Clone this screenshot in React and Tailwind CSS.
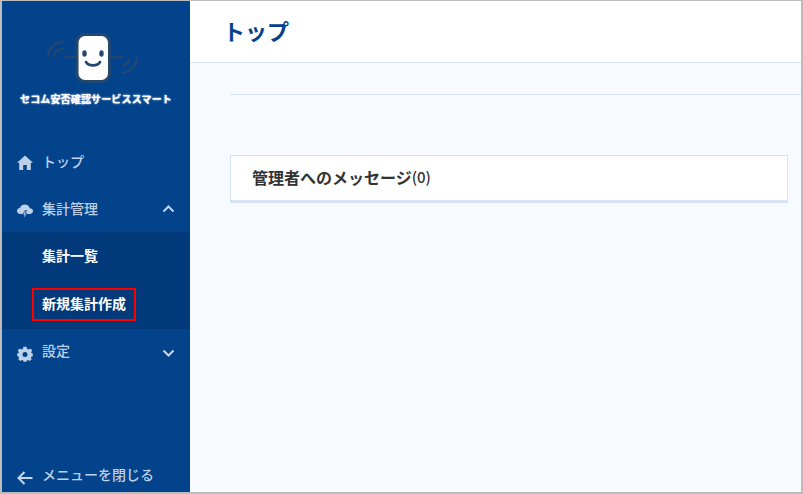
import React from "react";

const jp = "font-['Noto_Sans_CJK_JP','Noto_Sans',sans-serif]";

function Logo() {
  return (
    <svg width="102" height="54" viewBox="0 0 102 54" fill="none" className="block">
      <g stroke="#24476f" strokeWidth="2.4" strokeLinecap="round" fill="none">
        <path d="M3 26 C3.5 18 9.5 12.5 18 12" />
        <path d="M9 26 C9.5 22 12.5 19.5 18 19" />
        <path d="M92 28 C91.5 35 86 41.5 78 43" />
        <path d="M84 29 C83.5 32 81.5 34.5 78 35.5" />
        <path d="M19 27 H31" />
        <path d="M66 27 H77" />
      </g>
      <rect x="32" y="4.5" width="32.5" height="47" rx="8" fill="#ffffff" stroke="#24476f" strokeWidth="3" />
      <ellipse cx="39.5" cy="23.5" rx="2.2" ry="3.2" fill="#24476f" />
      <ellipse cx="56.5" cy="23.5" rx="2.2" ry="3.2" fill="#24476f" />
      <path d="M41 32 C43.5 36.5 52.5 36.5 55 32" stroke="#24476f" strokeWidth="2.6" strokeLinecap="round" />
    </svg>
  );
}

function Item({ icon, label, chevron, iconClass = "", labelClass = "" }) {
  return (
    <div className="flex h-[47px] items-center pl-[15px] pr-[14px] text-[#bcd0e8]">
      <span className={`flex w-[16px] justify-center ${iconClass}`}>{icon}</span>
      <span className={`ml-[9px] flex-1 text-[14px] font-medium leading-none ${labelClass}`}>{label}</span>
      {chevron}
    </div>
  );
}

const Chevron = ({ up }) => (
  <svg width="14" height="14" viewBox="0 0 14 14" fill="none">
    <path d={up ? "M1.5 9.5 L6.5 4.5 L11.5 9.5" : "M1.5 4.5 L6.5 9.5 L11.5 4.5"} stroke="#c5d6ea" strokeWidth="2" />
  </svg>
);

const Home = (
  <svg width="16" height="15" viewBox="0 0 16 15" fill="#bcd0e8">
    <path d="M8 0.5 L16 7.8 H13.8 V15 H9.8 V10 H6.2 V15 H2.2 V7.8 H0 Z" />
  </svg>
);

const Cloud = (
  <svg width="16" height="16" viewBox="0 0 16 16" fill="#bcd0e8">
    <path d="M4 11 C1.5 11 0 9.6 0 7.9 C0 6.3 1.3 5.2 2.9 5.1 C3.5 3 5.4 1.6 7.8 1.6 C10.4 1.6 12.3 3.2 12.8 5.3 C14.6 5.4 16 6.4 16 8 C16 9.7 14.6 11 12.4 11 Z" />
    <path d="M8.2 7.5 L5.4 11.8 H7.2 L6.4 16 L10 10.8 H8.2 L9.6 7.5 Z" fill="#bcd0e8" stroke="#03438b" strokeWidth="0.8" />
  </svg>
);

const Gear = (
  <svg width="16" height="16" viewBox="0 0 16 16">
    <path
      fill="#bcd0e8"
      fillRule="evenodd"
      d="M6.4 0.8 H9.6 L10 2.8 L11.6 3.5 L13.3 2.4 L15.3 4.6 L14.1 6.2 L14.7 7.3 L15.8 7.6 V10.2 L14.6 10.6 L14 11.8 L14.6 13.4 L12.4 15 L11 14 L9.8 14.4 L9.4 15.8 H6.6 L6.2 14.4 L5 14 L3.6 15 L1.4 13.4 L2 11.8 L1.4 10.6 L0.2 10.2 V7.6 L1.3 7.3 L1.9 6.2 L0.7 4.6 L2.7 2.4 L4.4 3.5 L6 2.8 Z M8 5.9 A2.5 2.5 0 1 0 8 10.9 A2.5 2.5 0 1 0 8 5.9 Z"
    />
  </svg>
);

const Back = (
  <svg width="16" height="14" viewBox="0 0 16 14" fill="none">
    <path d="M7.5 1 L1.5 7 L7.5 13 M1.5 7 H15.5" stroke="#c5d6ea" strokeWidth="2" />
  </svg>
);

export default function App() {
  return (
    <div className={`box-border flex h-[494px] w-[803px] overflow-hidden border-t border-r-2 border-b-2 border-l-2 border-[#bcbcbc] bg-[#f7fbff] ${jp}`}>
      <aside className="flex w-[188px] shrink-0 flex-col bg-[#03438b]">
        <div className="flex h-[131px] flex-col items-center pt-[29px]">
          <Logo />
          <div className="mt-[10px] text-[10px] font-bold leading-none tracking-[0.15px] whitespace-nowrap text-white [text-shadow:0_0_2px_#cfe2f8,0_0_1px_#cfe2f8]">
            セコム安否確認サービススマート
          </div>
        </div>
        <div className="pt-[6px]">
          <Item icon={Home} label="トップ" iconClass="pt-[2px]" labelClass="pb-[2px]" />
          <Item icon={Cloud} label="集計管理" iconClass="pt-[4px]" labelClass="pb-[2px]" chevron={<Chevron up />} />
          <div className="bg-[#02397a]">
            <div className="flex h-[48px] items-center pb-[2px] pl-[40px] text-[14px] font-bold leading-none text-white">集計一覧</div>
            <div className="flex h-[49px] items-center pl-[30px]">
              <div className="box-border flex h-[33px] w-[104px] items-center border-2 border-[#ff0000] pb-[3px] pl-2 text-[14px] font-bold leading-none whitespace-nowrap text-white">
                新規集計作成
              </div>
            </div>
          </div>
          <Item icon={Gear} label="設定" iconClass="pt-[3px]" labelClass="pb-[5px]" chevron={<Chevron />} />
        </div>
        <div className="mt-auto flex h-[34px] items-start pl-[15px] text-[#bcd0e8]">
          <span className="mt-[13px]">{Back}</span>
          <span className="mt-[6px] ml-[9px] text-[14px] font-medium leading-[20px]">メニューを閉じる</span>
        </div>
      </aside>
      <main className="min-w-0 flex-1">
        <header className="flex h-[62px] items-center border-b border-[#d5e3f5] bg-white pb-[3px] pl-[33px]">
          <h1 className="text-[22px] font-bold leading-none text-[#03438b]">トップ</h1>
        </header>
        <div className="pt-[31px] pl-[40px]">
          <div className="h-px bg-[#d5e3f5]" />
          <section className="mt-[60px] mr-[13px] box-border flex h-[48px] items-center border border-b-[3px] border-[#d5e3f5] bg-white pb-[2px] pl-[21px] text-[16px] font-bold text-[#333333]">
            管理者へのメッセージ<span className="text-[15px] font-medium">(0)</span>
          </section>
        </div>
      </main>
    </div>
  );
}
